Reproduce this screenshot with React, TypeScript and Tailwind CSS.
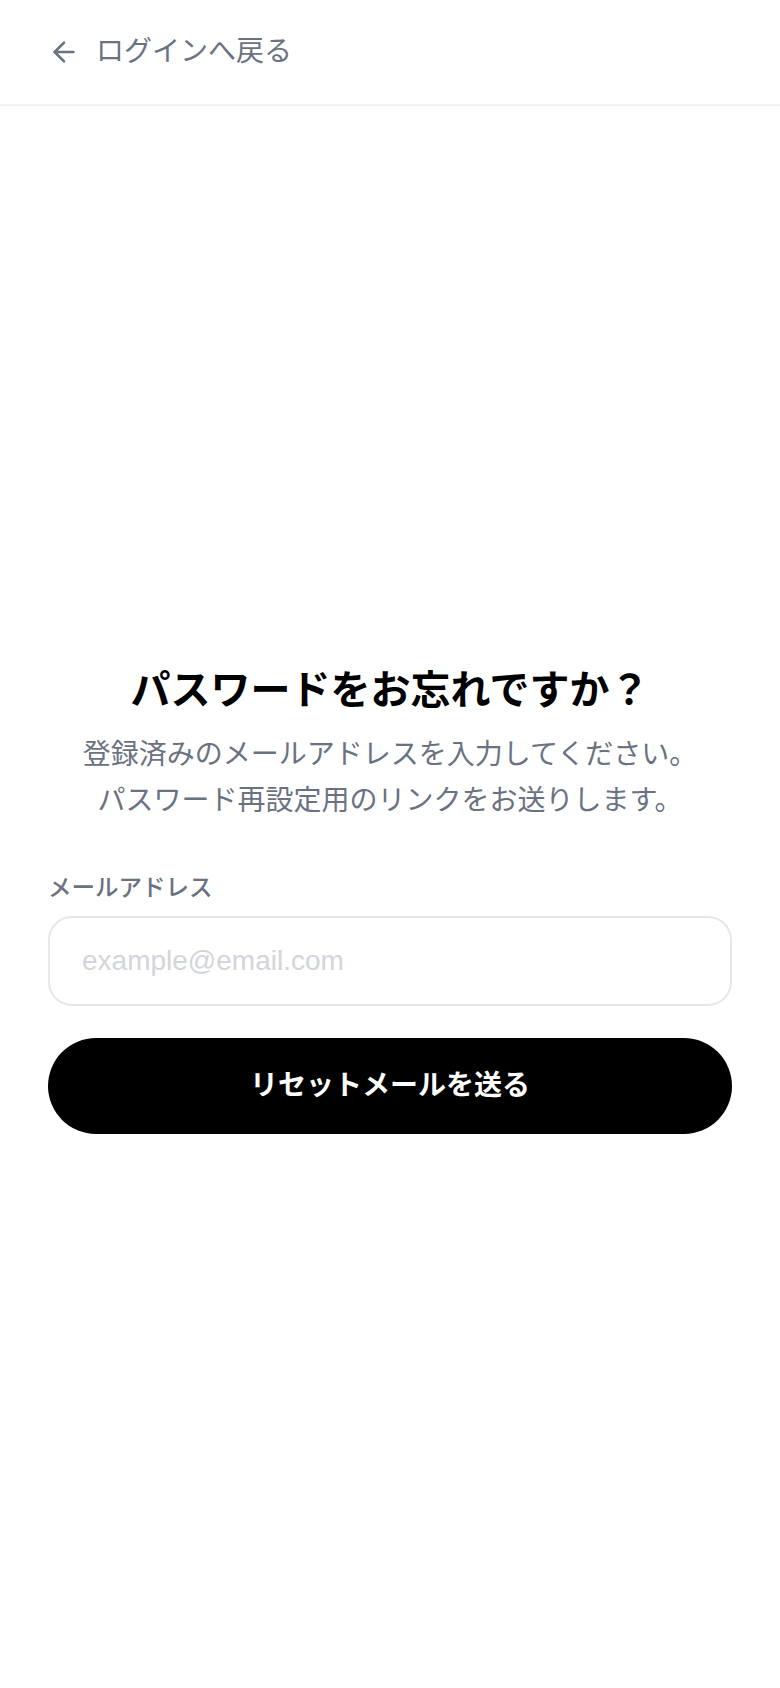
import { ArrowLeft } from 'lucide-react'

const font = {
  fontFamily: '"Liberation Sans", "Noto Sans CJK JP", sans-serif',
}

export default function App() {
  return (
    <div
      className="flex min-h-screen w-full flex-col bg-white"
      style={font}
    >
      <header className="flex h-[106px] items-center gap-4 border-b-2 border-gray-100 px-12">
        <ArrowLeft size={32} strokeWidth={2} className="text-gray-500" />
        <span className="text-[28px] leading-none text-gray-500">
          ログインへ戻る
        </span>
      </header>

      <main className="flex flex-1 flex-col justify-center px-12">
        <h1 className="text-center text-[40px] font-bold leading-[60px] text-black">
          パスワードをお忘れですか？
        </h1>
        <p className="mt-3 text-center text-[28px] leading-[46px] text-gray-500">
          登録済みのメールアドレスを入力してください。
          <br />
          パスワード再設定用のリンクをお送りします。
        </p>

        <form className="mt-12 flex flex-col">
          <label className="mb-3 text-[23.5px] font-medium leading-[32px] text-gray-500">
            メールアドレス
          </label>
          <input
            type="email"
            placeholder="example@email.com"
            className="h-[90px] w-full rounded-3xl border-2 border-gray-200 bg-white px-8 text-[28px] text-gray-900 outline-none placeholder:text-gray-300"
          />
          <button
            type="button"
            className="mt-8 h-[96px] w-full rounded-full bg-black text-[28px] font-bold text-white"
          >
            リセットメールを送る
          </button>
        </form>
      </main>
    </div>
  )
}
